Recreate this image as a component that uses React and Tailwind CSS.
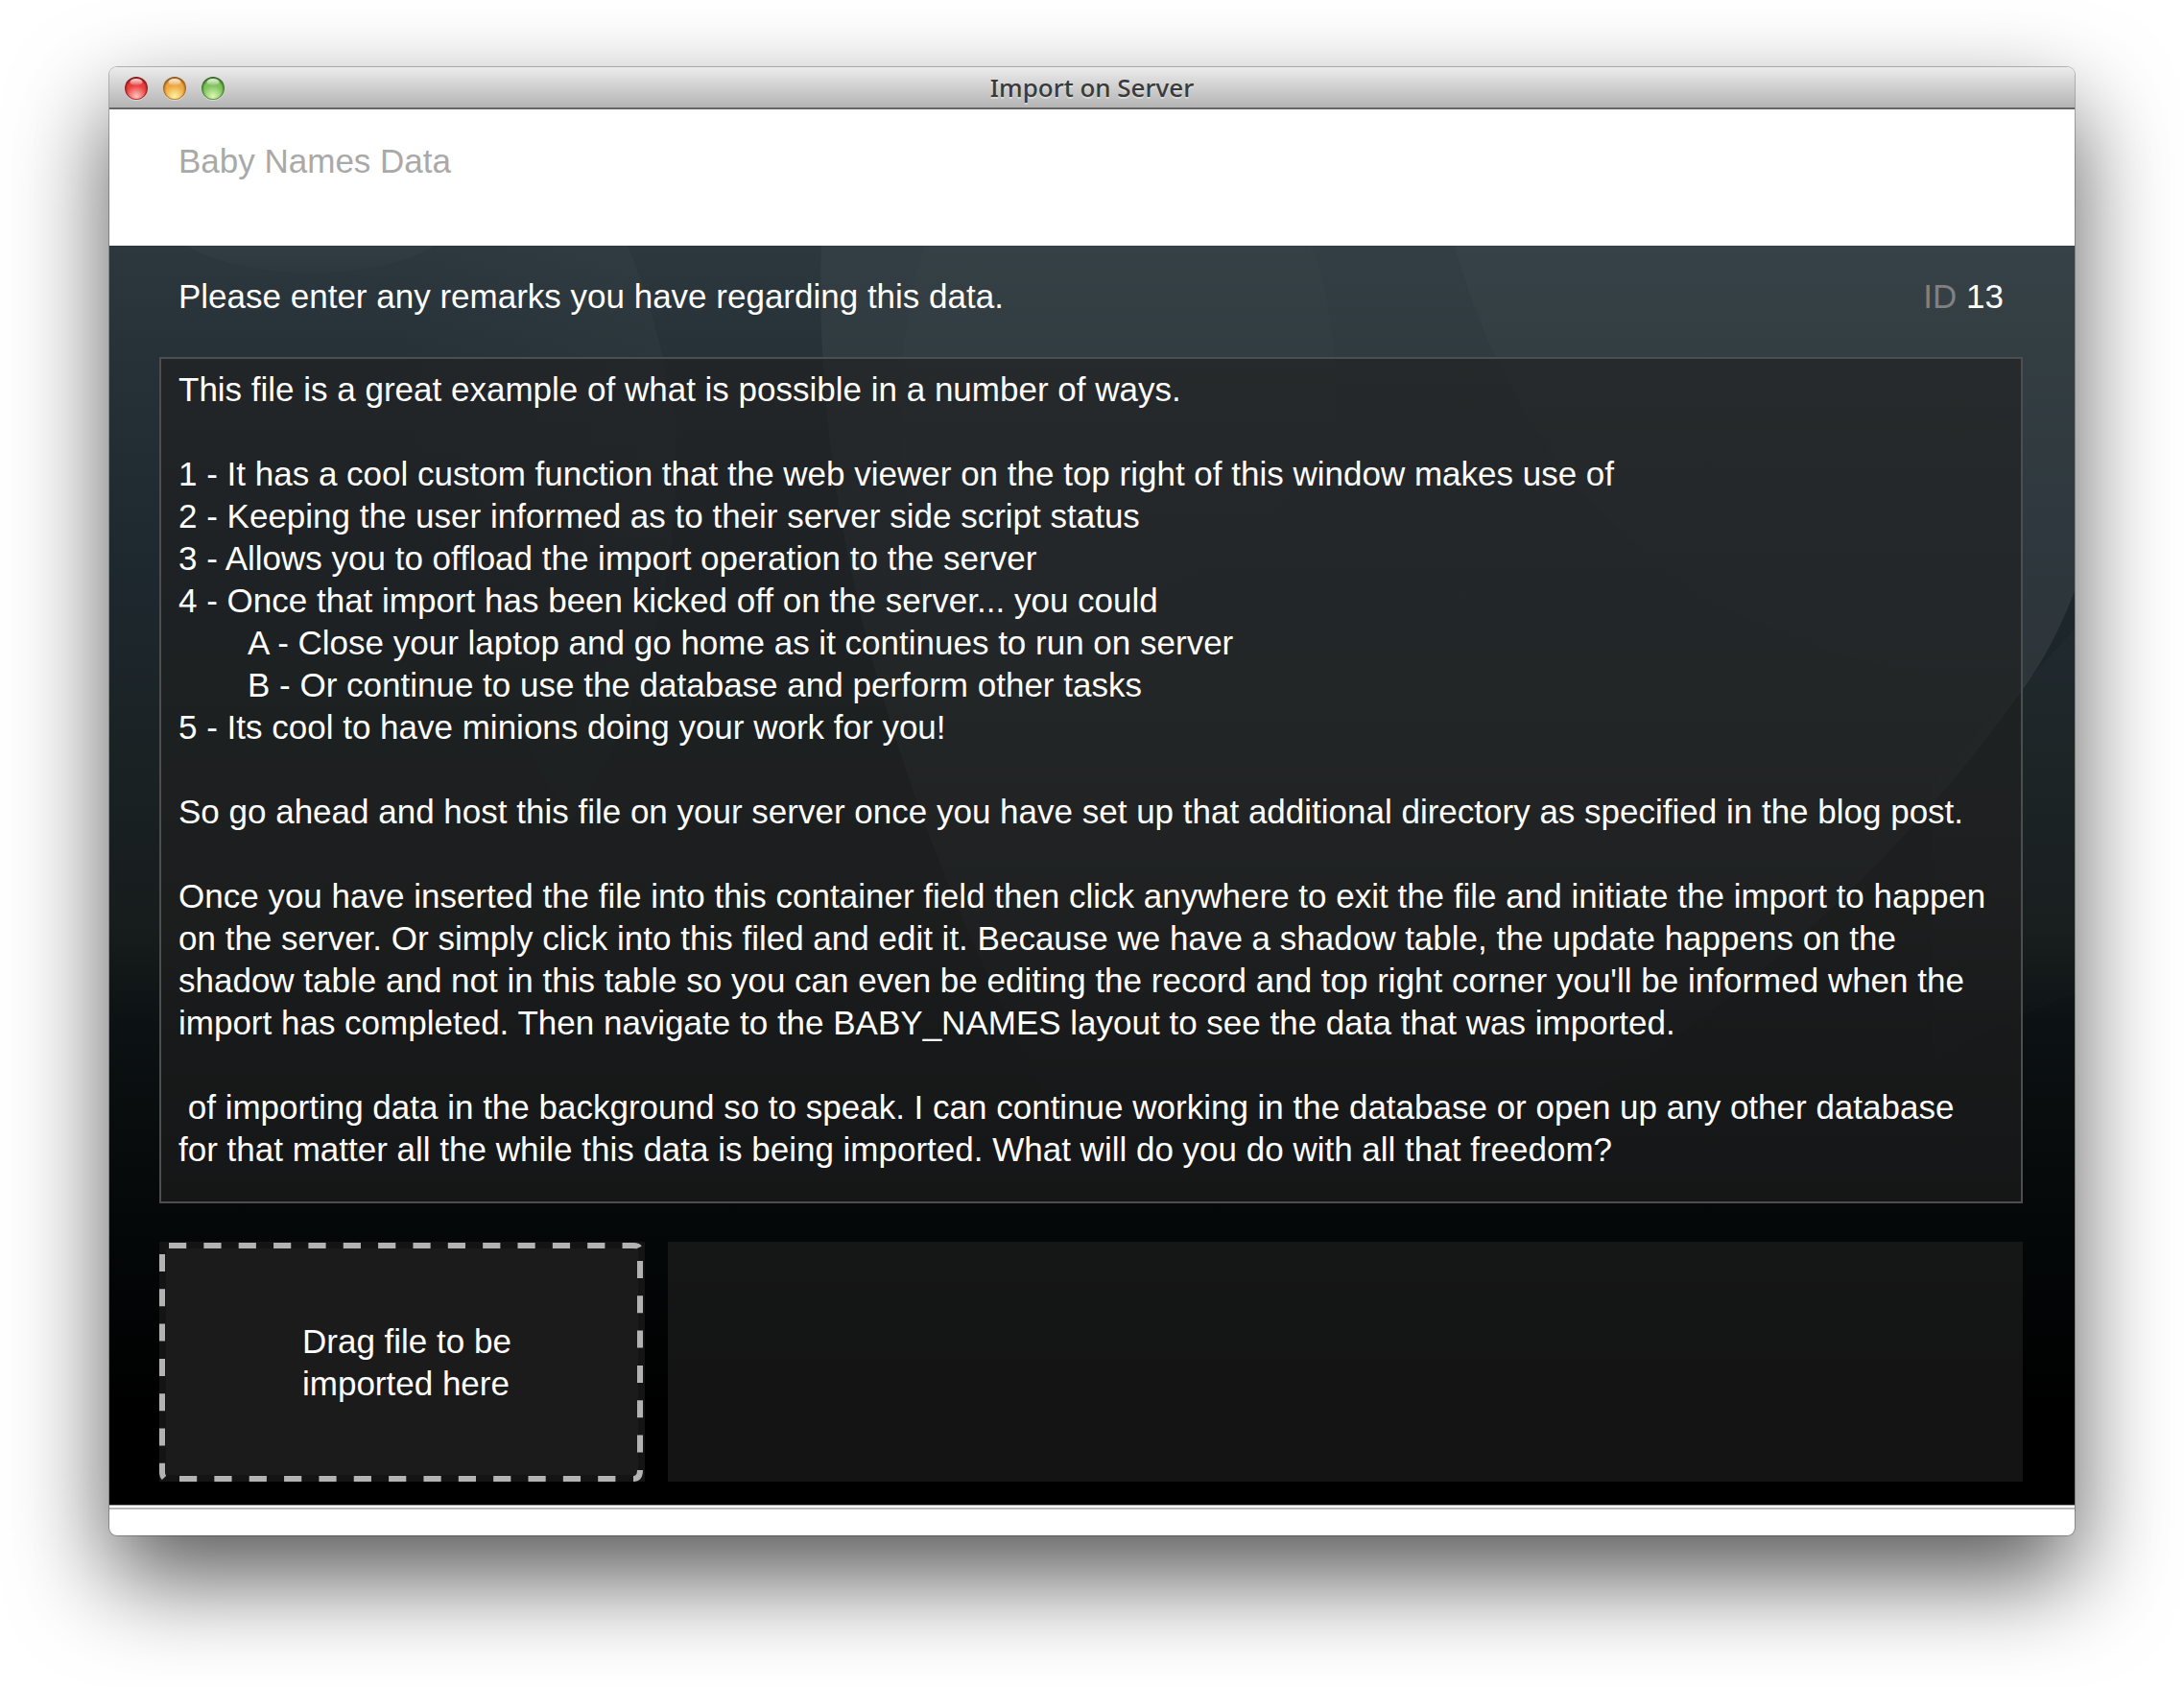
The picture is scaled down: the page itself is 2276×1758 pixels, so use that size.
import { useState } from 'react';

const initialRemarks = `This file is a great example of what is possible in a number of ways.

1 - It has a cool custom function that the web viewer on the top right of this window makes use of
2 - Keeping the user informed as to their server side script status
3 - Allows you to offload the import operation to the server
4 - Once that import has been kicked off on the server... you could
\tA - Close your laptop and go home as it continues to run on server
\tB - Or continue to use the database and perform other tasks
5 - Its cool to have minions doing your work for you!

So go ahead and host this file on your server once you have set up that additional directory as specified in the blog post.

Once you have inserted the file into this container field then click anywhere to exit the file and initiate the import to happen on the server. Or simply click into this filed and edit it. Because we have a shadow table, the update happens on the shadow table and not in this table so you can even be editing the record and top right corner you'll be informed when the import has completed. Then navigate to the BABY_NAMES layout to see the data that was imported.

 of importing data in the background so to speak. I can continue working in the database or open up any other database for that matter all the while this data is being imported. What will do you do with all that freedom?`;

const lights = [
  { label: 'Close', rim: '#7d1517', body: '#e8403f', glow: '#ffc4bd' },
  { label: 'Minimize', rim: '#8a5413', body: '#eda640', glow: '#fdf3a0' },
  { label: 'Zoom', rim: '#2f6321', body: '#7fc25c', glow: '#dcf7b4' },
];

function TrafficLight({ label, rim, body, glow }) {
  return (
    <button type="button" aria-label={label} className="size-6">
      <svg viewBox="0 0 24 24" className="size-6 overflow-visible">
        <defs>
          <radialGradient id={`${label}-body`} cx="50%" cy="54%" r="52%">
            <stop offset="0" stopColor={body} />
            <stop offset="0.72" stopColor={body} />
            <stop offset="1" stopColor={rim} />
          </radialGradient>
          <radialGradient id={`${label}-glow`} cx="50%" cy="88%" r="52%">
            <stop offset="0" stopColor={glow} />
            <stop offset="1" stopColor={glow} stopOpacity="0" />
          </radialGradient>
          <linearGradient id={`${label}-shine`} x1="0" y1="0" x2="0" y2="1">
            <stop offset="0" stopColor="#fff" stopOpacity="0.85" />
            <stop offset="1" stopColor="#fff" stopOpacity="0.1" />
          </linearGradient>
        </defs>
        <circle cx="12" cy="13" r="12" fill="#fff" opacity="0.45" />
        <circle cx="12" cy="12" r="12" fill={`url(#${label}-body)`} />
        <circle cx="12" cy="12" r="11" fill={`url(#${label}-glow)`} />
        <ellipse cx="12" cy="5.5" rx="6.5" ry="3.5" fill={`url(#${label}-shine)`} />
      </svg>
    </button>
  );
}

function Backdrop() {
  return (
    <svg
      aria-hidden="true"
      viewBox="0 0 2048 1312"
      preserveAspectRatio="none"
      className="absolute inset-0 h-full w-full"
    >
      <defs>
        <linearGradient id="base" x1="0" y1="0" x2="0" y2="1">
          <stop offset="0" stopColor="#2c383e" />
          <stop offset="0.1" stopColor="#263137" />
          <stop offset="0.25" stopColor="#1e282f" />
          <stop offset="0.4" stopColor="#1a2224" />
          <stop offset="0.54" stopColor="#171c1d" />
          <stop offset="0.62" stopColor="#0c1113" />
          <stop offset="0.76" stopColor="#05090a" />
          <stop offset="0.92" stopColor="#000" />
        </linearGradient>
        <linearGradient id="fade" x1="0" y1="0" x2="0" y2="1">
          <stop offset="0" stopColor="#6a7476" stopOpacity="0.12" />
          <stop offset="1" stopColor="#6a7476" stopOpacity="0.04" />
        </linearGradient>
        <linearGradient id="lift" gradientUnits="userSpaceOnUse" x1="0" y1="0" x2="0" y2="900">
          <stop offset="0" stopColor="#747a7c" stopOpacity="0.1" />
          <stop offset="0.5" stopColor="#747a7c" stopOpacity="0.18" />
          <stop offset="1" stopColor="#747a7c" stopOpacity="0" />
        </linearGradient>
        <linearGradient id="edge" x1="0" y1="0" x2="1" y2="0">
          <stop offset="0" stopColor="#6a7476" stopOpacity="0" />
          <stop offset="1" stopColor="#6a7476" stopOpacity="0.12" />
        </linearGradient>
      </defs>
      <rect width="2048" height="1312" fill="url(#base)" />
      <path d="M80 0 Q130 28 212 28 Q300 26 338 0Z" fill="url(#fade)" opacity="0.7" />
      <path d="M300 0 L540 0 Q570 70 590 180 Q600 420 480 600 Q300 300 300 0Z" fill="url(#edge)" opacity="0.6" />
      <path d="M742 0 L2048 0 L2048 360 Q2025 420 1994 462 Q1700 880 1100 1100 Q725 500 742 0Z" fill="url(#lift)" />
      <path d="M850 0 L1252 0 Q1280 60 1278 200 Q1100 440 850 380 Q800 160 850 0Z" fill="url(#fade)" opacity="0.3" />
      <path d="M1402 0 L2048 0 L2048 360 Q2025 420 1994 462 Q1520 420 1402 0Z" fill="url(#fade)" opacity="0.5" />
      <path d="M2048 780 Q1990 800 1900 850 L1900 560 L2048 400Z" fill="url(#fade)" opacity="0.4" />
    </svg>
  );
}

function DashedFrame() {
  return (
    <svg
      aria-hidden="true"
      viewBox="0 0 506 250"
      preserveAspectRatio="none"
      className="absolute inset-0 h-full w-full"
      fill="none"
      stroke="#b3b3b3"
      strokeWidth="6"
    >
      <path d="M10 4H494Q499 4 500 6" strokeDasharray="18.2 18.15" />
      <path d="M501 20V232" strokeDasharray="18 18.3" />
      <path d="M501 238Q501 247 494 247" />
      <path d="M21 247H480" strokeDasharray="18.2 18.15" />
      <path d="M3 13V231" strokeDasharray="18 18.3" />
      <path d="M3 231V240Q3 244 5 246" />
    </svg>
  );
}

export default function App() {
  const [title, setTitle] = useState('Baby Names Data');
  const [remarks, setRemarks] = useState(initialRemarks);

  return (
    <div className="min-h-screen bg-white px-[114px] pt-[70px] pb-[158px] font-['Liberation_Sans',Arial,sans-serif] text-[35px] leading-[44px] text-white">
      <main className="overflow-hidden rounded-[8px] bg-white shadow-[0_0_0_1px_rgba(0,0,0,0.25),0_44px_100px_rgba(0,0,0,0.66)]">
        <header className="relative flex h-11 items-center border-b-2 border-[#666] bg-linear-to-b from-[#ececec] to-[#b4b4b4] px-4 pt-[2px]">
          <div className="flex gap-4">
            {lights.map((light) => (
              <TrafficLight key={light.label} {...light} />
            ))}
          </div>
          <h1 className="pointer-events-none absolute inset-x-0 top-0 text-center font-['Noto_Sans','Open_Sans',sans-serif] text-[26px] font-medium leading-[42px] text-[#3a3a3a] [text-shadow:0_2px_0_rgba(255,255,255,0.4)]">
            Import on Server
          </h1>
        </header>

        <div className="px-[72px] pt-8 pb-[66px]">
          <input
            type="text"
            aria-label="Title"
            value={title}
            onChange={(e) => setTitle(e.target.value)}
            className="block h-11 w-full text-[#a9a9a9] focus:outline-none"
          />
        </div>

        <section className="relative">
          <Backdrop />
          <div className="relative pt-[31px] pr-[54px] pb-6 pl-[52px]">
            <div className="flex justify-between px-5">
              <label htmlFor="remarks">Please enter any remarks you have regarding this data.</label>
              <p>
                <span className="text-[#808080]">ID</span> 13
              </p>
            </div>

            <textarea
              id="remarks"
              rows={19}
              value={remarks}
              onChange={(e) => setRemarks(e.target.value)}
              className="mt-[41px] block w-full resize-none overflow-hidden border-2 border-[#4c4e4f] bg-[#1f1f1f]/64 pt-[10px] pr-6 pb-8 pl-[18px] [tab-size:72px] focus:outline-none"
            />

            <div className="mt-10 flex gap-6">
              <label className="relative flex h-[250px] w-[506px] shrink-0 items-center justify-center bg-[#141414] pt-[2px] pl-3">
                <span className="absolute inset-[7px] bg-[#1b1b1b]" />
                <DashedFrame />
                <input type="file" className="sr-only" />
                <span className="relative w-[220px]">Drag file to be imported here</span>
              </label>
              <div className="flex-1 bg-[#1f1f1f]/64" />
            </div>
          </div>
        </section>

        <footer className="border-t border-[#999] pt-[2px]">
          <div className="h-[29px] border-t-2 border-[#b8b8b8]" />
        </footer>
      </main>
    </div>
  );
}
